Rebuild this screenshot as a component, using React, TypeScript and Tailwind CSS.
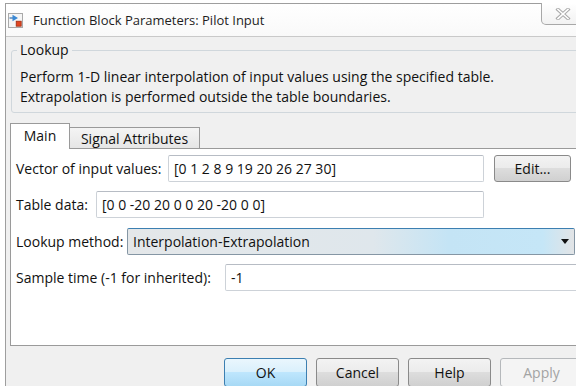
import React from "react";

// Win7-style Simulink "Function Block Parameters" dialog.

const rows = {
  inputs: "[0 1 2 8 9 19 20 26 27 30]",
  table: "[0 0 -20 20 0 0 20 -20 0 0]",
  method: "Interpolation-Extrapolation",
  sample: "-1",
};

function BlockIcon() {
  return (
    <svg width="15" height="15" viewBox="0 0 15 15" className="shrink-0">
      <rect x="0.5" y="0.5" width="14" height="14" fill="#f5f5f5" stroke="#a9a9a9" />
      <path d="M1.5 5 H5" stroke="#2d6fb3" strokeWidth="1.2" />
      <path d="M4.5 1.8 L10 5 L4.5 8.2 Z" fill="#3a88d4" />
      <rect x="8.2" y="8.2" width="5" height="5" fill="#e2451f" stroke="#9c2b12" strokeWidth="0.8" />
    </svg>
  );
}

function CloseGlyph() {
  return (
    <svg width="16" height="12" viewBox="0 0 16 12">
      <path d="M3 1.5 L13 10.5 M13 1.5 L3 10.5" stroke="#a9a9a9" strokeWidth="3.6" strokeLinecap="square" />
      <path d="M3 1.5 L13 10.5 M13 1.5 L3 10.5" stroke="#ffffff" strokeWidth="1.6" strokeLinecap="square" />
    </svg>
  );
}

function TextBox({ value, className }: { value: string; className: string }) {
  return (
    <div
      className={`flex h-[27px] shrink-0 items-center rounded-[2px] border border-[#cdd2d8] border-t-[#b7bcc4] bg-white pl-[5px] ${className}`}
    >
      {value}
    </div>
  );
}

function Button({ label, variant = "normal" }: { label: string; variant?: "normal" | "default" | "disabled" }) {
  const look =
    variant === "default"
      ? "border-[#3c7fb1] bg-[linear-gradient(#eaf6fd,#d9f0fc_50%,#bee6fd_50%,#a7d9f5)] text-[#111]"
      : variant === "disabled"
        ? "border-[#b5b8bb] bg-[#f4f4f4] text-[#a3a3a3]"
        : "border-[#8a8a8a] bg-[linear-gradient(#f3f3f3,#ebebeb_50%,#dddddd_50%,#d0d0d0)] text-[#111]";
  return (
    <div className={`flex h-[29px] w-[83px] shrink-0 items-center justify-center rounded-[3px] border ${look}`}>
      {label}
    </div>
  );
}

export default function App() {
  return (
    <div className="relative h-[386px] w-[576px] overflow-hidden bg-white font-['Open_Sans',sans-serif] text-[14px] leading-[20px] text-[#111]">
      <div className="ml-[5px] mt-[3px] flex h-[420px] w-[585px] flex-col border-l border-t border-[#9e9e9e]">
        {/* title bar */}
        <div className="flex h-[33px] shrink-0 items-center border-b border-[#c9c9c9] bg-[linear-gradient(#ffffff,#f9f9f9)]">
          <div className="ml-[2px]">
            <BlockIcon />
          </div>
          <span className="ml-[10px] text-[13px] text-[#1e1e1e]">Function Block Parameters: Pilot Input</span>
          <div className="-mt-[1px] ml-auto mr-[6px] flex h-[22px] w-[43px] items-center justify-center self-start rounded-bl-[5px] border border-t-0 border-[#a8a8a8] bg-[linear-gradient(#ffffff,#f2f2f2)]">
            <CloseGlyph />
          </div>
        </div>

        {/* client area */}
        <div className="flex flex-1 flex-col bg-[#f0f0f0]">
          {/* group box */}
          <div className="relative ml-[5px] mt-[13px] h-[63px] rounded-[3px] border border-[#d0d7dc] pl-[8px] pt-[16px]">
            <span className="absolute -top-[11px] left-[5px] bg-[#f0f0f0] px-[3px]">Lookup</span>
            <p>Perform 1-D linear interpolation of input values using the specified table.</p>
            <p>Extrapolation is performed outside the table boundaries.</p>
          </div>

          {/* tabs */}
          <div className="ml-[4px] mt-[10px] flex h-[25px] items-end">
            <div className="relative z-10 -mb-[1px] flex h-[26px] w-[60px] items-center justify-center border border-b-0 border-[#9a9a9a] bg-white pb-[1px]">
              Main
            </div>
            <div className="-ml-[1px] flex h-[21px] w-[131px] items-center justify-center border border-b-0 border-[#9a9a9a] bg-[linear-gradient(#f4f4f4,#e6e6e6)] pt-[1px]">
              Signal Attributes
            </div>
          </div>

          {/* tab page */}
          <div className="ml-[4px] flex h-[198px] flex-col gap-[9px] border border-[#9a9a9a] bg-white pl-[5px] pt-[6px]">
            <div className="flex items-center">
              <span className="w-[152px] shrink-0">Vector of input values:</span>
              <TextBox value={rows.inputs} className="w-[316px]" />
              <div className="ml-[10px] flex h-[27px] w-[77px] shrink-0 items-center justify-center rounded-[3px] border border-[#8a8a8a] bg-[linear-gradient(#f3f3f3,#ebebeb_50%,#dddddd_50%,#d0d0d0)]">
                Edit...
              </div>
            </div>
            <div className="flex items-center">
              <span className="w-[80px] shrink-0">Table data:</span>
              <TextBox value={rows.table} className="w-[388px]" />
            </div>
            <div className="mt-[1px] flex items-center">
              <span className="w-[111px] shrink-0">Lookup method:</span>
              <div className="flex h-[27px] w-[448px] shrink-0 items-center justify-between rounded-[2px] border border-[#8596a4] border-t-[#3c7fb1] bg-[linear-gradient(90deg,#e4e7e9,#dfe7ec_55%,#c4e4f5_72%,#c5e6f7_93%,#e2e4e6)] pl-[5px] pr-[5px]">
                <span>{rows.method}</span>
                <svg width="8" height="5" viewBox="0 0 8 5">
                  <path d="M0 0 H8 L4 5 Z" fill="#111" />
                </svg>
              </div>
            </div>
            <div className="flex items-center">
              <span className="w-[209px] shrink-0">Sample time (-1 for inherited):</span>
              <TextBox value={rows.sample} className="w-[360px]" />
            </div>
          </div>

          {/* buttons */}
          <div className="ml-[218px] mt-[12px] flex gap-[9px]">
            <Button label="OK" variant="default" />
            <Button label="Cancel" />
            <Button label="Help" />
            <Button label="Apply" variant="disabled" />
          </div>
        </div>
      </div>
    </div>
  );
}
